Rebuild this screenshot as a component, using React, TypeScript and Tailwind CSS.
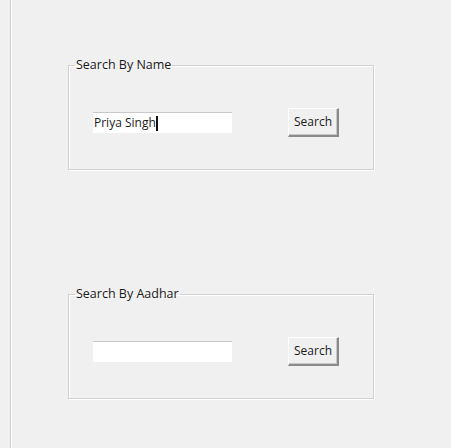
import React from "react";

function Group({ title, value, top }: { title: string; value: string; top: string }) {
  return (
    <fieldset
      className={`${top} w-[306px] h-[113px] border border-[#d0d0d0] shadow-[inset_1px_1px_0_#ffffff,1px_1px_0_#ffffff] rounded-none px-0`}
    >
      <legend className="ml-[6px] px-[1px] text-[12.5px] font-medium leading-[16px] text-[#1a1a1a]">{title}</legend>
      <div className="flex items-center mt-[35px]">
        <div className="ml-[24px] w-[139px] h-[21px] bg-white border-t border-[#c8c8c8] flex items-center text-[12px] font-medium text-[#1a1a1a] pl-[1px]">
          <span>{value}</span>
          {value && <span className="w-[2px] h-[15px] bg-[#111]" />}
        </div>
        <button className="ml-[56px] w-[51px] h-[29px] bg-[#f0f0f0] border-r-2 border-b-2 border-[#8a8a8a] border-l border-t border-l-white border-t-white shadow-[inset_-1px_-1px_0_#c8c8c8] text-[12px] font-medium text-[#1a1a1a] flex items-center justify-center">
          Search
        </button>
      </div>
    </fieldset>
  );
}

export default function App() {
  return (
    <div
      className="w-[451px] h-[448px] bg-[#f0f0f0] flex"
      style={{ fontFamily: '"Open Sans", "Noto Sans", sans-serif' }}
    >
      <div className="w-[10px]" />
      <div className="w-[1px] bg-[#cfcfcf]" />
      <div className="w-[1px] bg-white" />
      <div className="flex flex-col ml-[56px]">
        <Group title="Search By Name" value="Priya Singh" top="mt-[57px]" />
        <Group title="Search By Aadhar" value="" top="mt-[116px]" />
      </div>
    </div>
  );
}
